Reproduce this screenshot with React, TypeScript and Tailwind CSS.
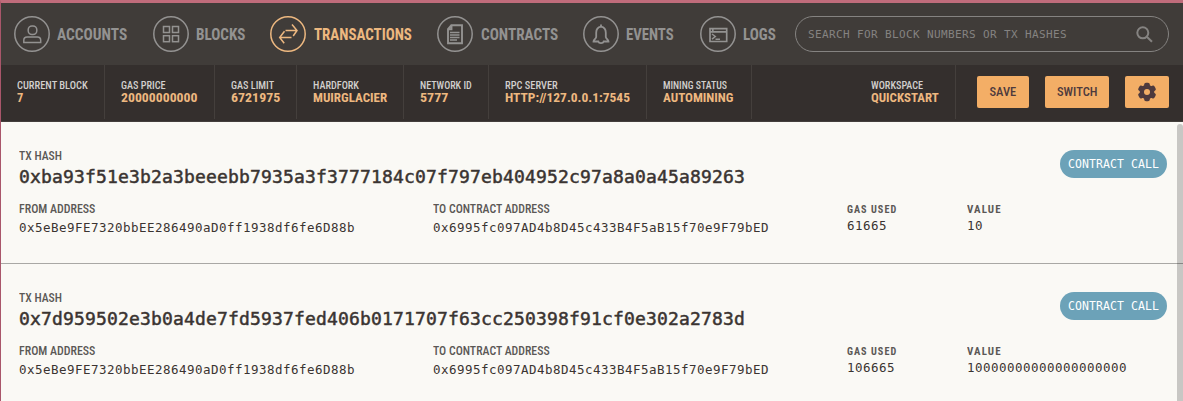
import { useLayoutEffect, useRef, useState } from "react";
import type { ReactNode } from "react";

const condensed = "[font-family:'Roboto_Condensed',Roboto,sans-serif] [font-stretch:75%]";
const mono = "[font-family:'DejaVu_Sans_Mono','Liberation_Mono',monospace]";

/** Single line of condensed type, squeezed horizontally to the given width. */
function Fit({ w, className, children }: { w: number; className: string; children: ReactNode }) {
  const ref = useRef<HTMLSpanElement>(null);
  const [scale, setScale] = useState(1);
  useLayoutEffect(() => {
    if (ref.current) setScale(w / ref.current.offsetWidth);
  }, [w]);
  return (
    <span className={`flex whitespace-nowrap ${condensed} ${className}`} style={{ width: w }}>
      <span ref={ref} className="shrink-0 origin-left" style={{ transform: `scaleX(${scale})` }}>
        {children}
      </span>
    </span>
  );
}

const icons: Record<string, ReactNode> = {
  ACCOUNTS: (
    <>
      <rect x="14.2" y="10" width="8.600" height="8.600" rx="3.800" />
      <path d="M9.800 26.500v-2.200c0-2 1.300-3.300 3.300-3.300h10.300c2 0 3.300 1.300 3.300 3.300v2.200z" />
    </>
  ),
  BLOCKS: (
    <>
      <rect x="10.500" y="10.500" width="6" height="6" />
      <rect x="19.500" y="10.500" width="6" height="6" />
      <rect x="10.500" y="19.700" width="6" height="6" />
      <rect x="19.500" y="19.700" width="6" height="6" />
    </>
  ),
  TRANSACTIONS: (
    <path d="M15.500 14.500h11.500M22 8.500l5 6-3.800 5.500M21.500 21.500H9.700M14.500 15.200l-4.800 6.300 4.500 5.800" />
  ),
  CONTRACTS: (
    <>
      <path d="M14.300 9.300h10.700v17.900H11v-14.200zM14.500 9.300v4H11" strokeWidth="1.900" />
      <path d="M13 16.500h9.500M13 19h9.500M13 21.500h9.500M13 24h7" />
    </>
  ),
  EVENTS: (
    <path d="M18 8.500v2.200c-3.300.6-4.800 3-4.800 6v4.300c0 1.700-2.700 2.700-2.700 4.500h4.800c.3 1.200 1.400 1.600 2.700 1.600s2.400-.4 2.700-1.600h4.800c0-1.800-2.700-2.800-2.700-4.500v-4.300c0-3-1.500-5.400-4.800-6" strokeWidth="1.800" />
  ),
  LOGS: (
    <>
      <path d="M10 12.700h16.700v12.800H10zM10 15.800h16.700M12.800 12.500v3.300" strokeWidth="1.700" />
      <path d="M12 18l3.300 2.500-3.300 2.700M15.500 23.300h4.500" />
    </>
  ),
};

const nav = [
  { label: "ACCOUNTS", w: 70, box: "w-[139px] gap-[7px]" },
  { label: "BLOCKS", w: 49, box: "w-[117px] gap-[7px]" },
  { label: "TRANSACTIONS", w: 98, box: "w-[167px] gap-2" },
  { label: "CONTRACTS", w: 77, box: "w-[146px] gap-2" },
  { label: "EVENTS", w: 48, box: "w-[117px] gap-[7px]" },
  { label: "LOGS", w: 33, box: "w-[95px] gap-[7px]" },
];

const stats = [
  { label: "CURRENT BLOCK", lw: 71, value: "7", vw: 6, box: "w-[104px]" },
  { label: "GAS PRICE", lw: 45, value: "20000000000", vw: 77, box: "w-[110px]" },
  { label: "GAS LIMIT", lw: 43, value: "6721975", vw: 49, box: "w-[82px]" },
  { label: "HARDFORK", lw: 46, value: "MUIRGLACIER", vw: 74, box: "w-[107px]" },
  { label: "NETWORK ID", lw: 52, value: "5777", vw: 28, box: "w-[85px]" },
  { label: "RPC SERVER", lw: 53, value: "HTTP://127.0.0.1:7545", vw: 125, box: "w-[158px]" },
  { label: "MINING STATUS", lw: 64, value: "AUTOMINING", vw: 71, box: "w-[105px]" },
];

const transactions = [
  { hash: "0xba93f51e3b2a3beeebb7935a3f3777184c07f797eb404952c97a8a0a45a89263", gas: "61665", value: "10" },
  { hash: "0x7d959502e3b0a4de7fd5937fed406b0171707f63cc250398f91cf0e302a2783d", gas: "106665", value: "10000000000000000000" },
];

function Stat({ label, lw, value, vw, box }: (typeof stats)[number]) {
  return (
    <div className={`h-[54px] shrink-0 border-r border-[#443f3c] pt-[15px] pl-4 ${box}`}>
      <Fit w={lw} className="text-[10px] leading-3 font-medium text-[#d2d0cd]">{label}</Fit>
      <Fit w={vw} className="text-[12.500px] leading-3 font-bold text-[#edb880]">{value}</Fit>
    </div>
  );
}

const button = "flex h-8 shrink-0 items-center justify-center rounded-[2px] bg-[#f3ae66] text-[#4e3a3d]";
const data = `${mono} whitespace-nowrap text-[12.500px] leading-4 tracking-[0.475px] text-[#3a3431]`;

export default function App() {
  return (
    <div className="flex h-[401px] w-[1183px] flex-col overflow-hidden border-t-[3px] border-l border-t-[#c06c7b] border-l-[#a9566a] bg-[#faf9f5]">
      <nav className="flex h-[62px] shrink-0 items-center bg-[#403c39] pl-[13px]">
        {nav.map((n) => (
          <a key={n.label} className={`flex shrink-0 items-center ${n.box} ${n.label === "TRANSACTIONS" ? "text-[#edb880]" : "text-[#939291]"}`}>
            <svg width="36" height="36" viewBox="0 0 36 36" fill="none" stroke="currentColor" strokeWidth="1.500" className="shrink-0">
              <circle cx="18" cy="18" r="17.200" />
              {icons[n.label]}
            </svg>
            <Fit w={n.w} className="pt-px text-base leading-5 font-bold">{n.label}</Fit>
          </a>
        ))}
        <div className="flex h-9 w-[374px] shrink-0 items-center justify-between rounded-full border border-[#858381] pr-[15px] pl-3 text-[#858381]">
          <span className={`${mono} pt-px text-[11px] leading-4 tracking-[0.378px] whitespace-nowrap`}>SEARCH FOR BLOCK NUMBERS OR TX HASHES</span>
          <svg width="17" height="17" viewBox="0 0 17 17" fill="none" stroke="currentColor" strokeWidth="2">
            <circle cx="6.800" cy="6.800" r="5.500" />
            <path d="M10.800 10.800l5.200 5" />
          </svg>
        </div>
      </nav>

      <header className="flex h-[57px] shrink-0 border-b border-[#443f3c] bg-[#342f2d]">
        {stats.map((s) => <Stat key={s.label} {...s} />)}
        <div className="flex-1" />
        <Stat label="WORKSPACE" lw={52} value="QUICKSTART" vw={68} box="w-[101px]" />
        <div className="flex gap-4 pt-[11px] pr-[14px] pl-[21px]">
          <button className={`${button} w-[52px]`}><Fit w={27} className="text-[12.500px] font-medium">SAVE</Fit></button>
          <button className={`${button} w-16`}><Fit w={40} className="text-[12.500px] font-medium">SWITCH</Fit></button>
          <button className={`${button} w-11`}>
            <svg width="20" height="20" viewBox="0 0 20 20" fill="currentColor">
              <circle cx="10" cy="10" r="7.300" />
              <rect x="7.200" y="0.700" width="5.600" height="18.600" rx="1.800" />
              <rect x="7.200" y="0.700" width="5.600" height="18.600" rx="1.800" transform="rotate(60 10 10)" />
              <rect x="7.200" y="0.700" width="5.600" height="18.600" rx="1.800" transform="rotate(120 10 10)" />
              <circle cx="10" cy="10" r="3" fill="#f3ae66" />
            </svg>
          </button>
        </div>
      </header>

      <main className="flex min-h-0 flex-1">
        <div className="flex w-[1176px] shrink-0 flex-col">
          {transactions.map((t) => (
            <article key={t.hash} className="flex h-[142px] w-[1182px] shrink-0 flex-col border-b border-[#a9a8a5] pt-7 pr-4 pl-[18px]">
              <div className="flex h-[50px] items-start justify-between">
                <div>
                  <Fit w={43} className="text-[12.500px] leading-3 font-medium text-[#5b5855]">TX HASH</Fit>
                  <div className={`${mono} mt-[3px] text-[18px] leading-6 font-medium tracking-[0.163px] text-[#3a3431] [-webkit-text-stroke:0.5px_#3a3431]`}>{t.hash}</div>
                </div>
                <span className={`${mono} flex h-7 w-[107px] items-center justify-center rounded-full bg-[#6ca2b8] pt-0.5 text-[11.500px] tracking-[0.077px] whitespace-nowrap text-white`}>CONTRACT CALL</span>
              </div>
              <div className="flex pt-[3px]">
                <div className="w-[414px]">
                  <Fit w={76} className="text-[12.500px] leading-3 font-medium text-[#5b5855]">FROM ADDRESS</Fit>
                  <div className={`${data} mt-[5px]`}>0x5eBe9FE7320bbEE286490aD0ff1938df6fe6D88b</div>
                </div>
                <div className="w-[414px]">
                  <Fit w={117} className="text-[12.500px] leading-3 font-medium text-[#5b5855]">TO CONTRACT ADDRESS</Fit>
                  <div className={`${data} mt-[5px]`}>0x6995fc097AD4b8D45c433B4F5aB15f70e9F79bED</div>
                </div>
                <div className="w-[120px]">
                  <Fit w={50} className="pt-px text-[10px] leading-3 font-bold tracking-[1px] text-[#5b5855]">GAS USED</Fit>
                  <div className={`${data} mt-[2px]`}>{t.gas}</div>
                </div>
                <div>
                  <Fit w={35} className="pt-px text-[10px] leading-3 font-bold tracking-[1px] text-[#5b5855]">VALUE</Fit>
                  <div className={`${data} mt-[2px]`}>{t.value}</div>
                </div>
              </div>
            </article>
          ))}
        </div>
        <div className="mt-0.5 w-[6px] shrink-0 rounded-t-[3px] bg-black/20" />
      </main>
    </div>
  );
}
